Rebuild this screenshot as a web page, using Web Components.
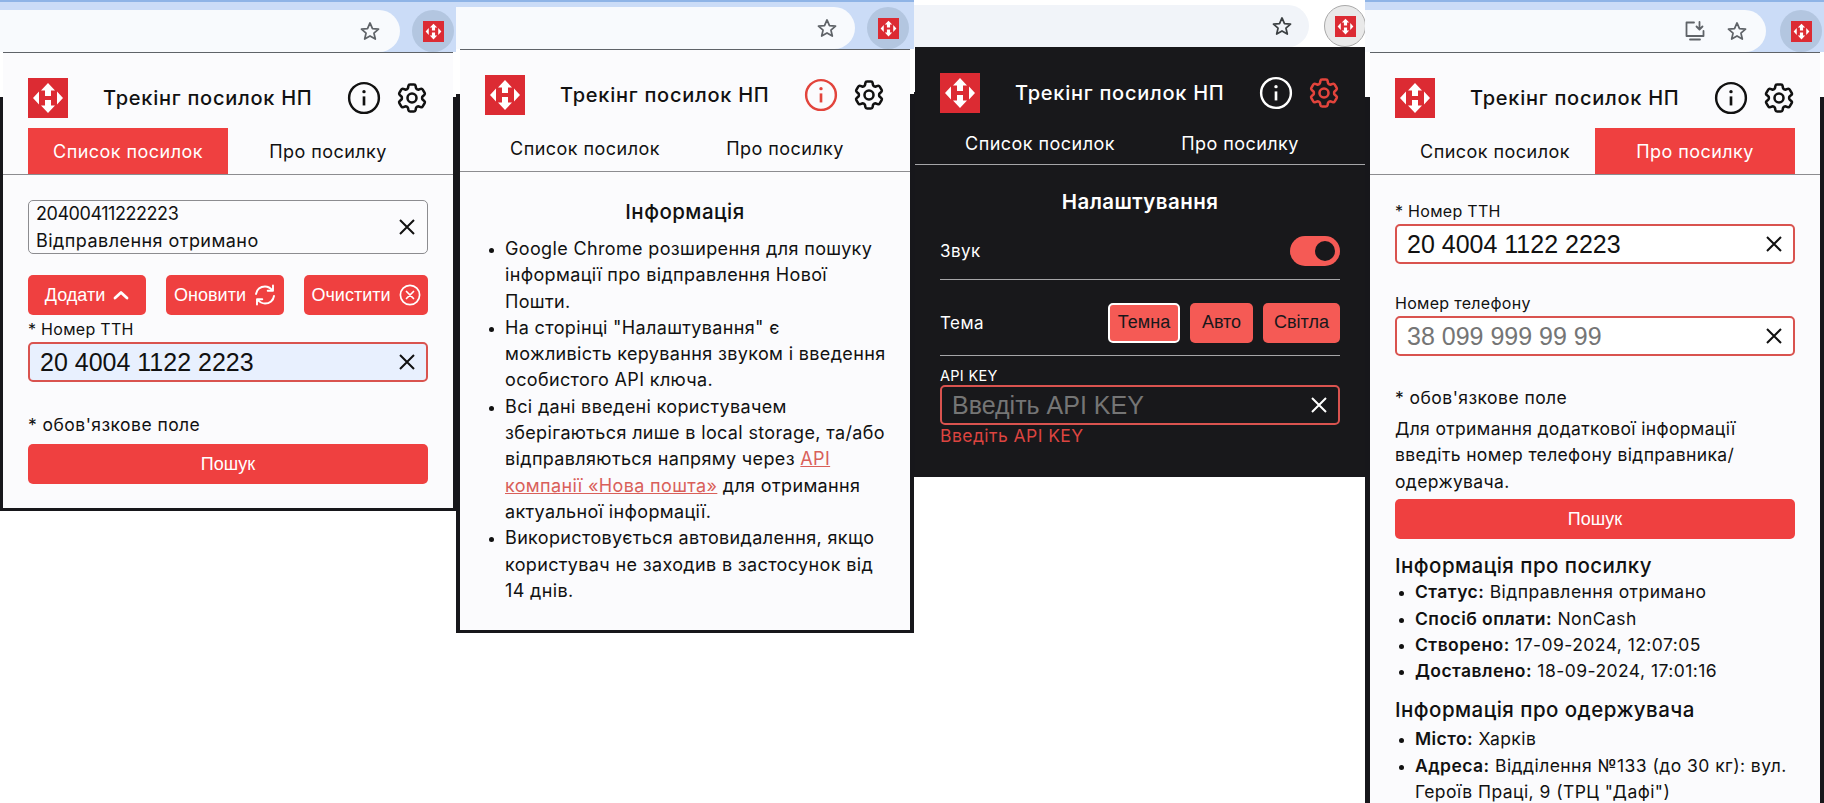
<!doctype html>
<html lang="uk">
<head>
<meta charset="utf-8">
<title>Трекінг посилок НП</title>
<style>
  html, body { margin: 0; height: 803px; overflow: hidden; background: #fff; }
  body { display: flex; align-items: flex-start; font-family: Inter, "Noto Sans", sans-serif; }
</style>
</head>
<body>

<np-shot style="--shot-w:456px;--pad-l:3px;--pad-r:3px" top="10">
  <np-popup tab="list">
    <np-stack style="--pad:25px 25px 24px">
      <np-parcel number="20400411222223" status="Відправлення отримано"></np-parcel>
      <div style="display:flex;justify-content:space-between;margin-top:21px">
        <np-button w="118" icon="chevron">Додати</np-button>
        <np-button w="118" icon="refresh">Оновити</np-button>
        <np-button w="124" icon="clear">Очистити</np-button>
      </div>
      <np-field label="* Номер ТТН" autofill style="margin-top:4px">20 4004 1122 2223</np-field>
      <np-note style="margin-top:32px">* обов'язкове поле</np-note>
      <np-button full style="margin-top:8px">Пошук</np-button>
    </np-stack>
  </np-popup>
</np-shot>

<np-shot style="--shot-w:458px;--pad-l:4px;--pad-r:4px;--ext-mr:5px;--star-r:17px" top="7">
  <np-popup selected="info">
    <np-stack style="--pad:28px 25px 26px">
      <np-heading>Інформація</np-heading>
      <np-list style="margin-top:12px;letter-spacing:.35px">
        <li>Google Chrome розширення для пошуку інформації про відправлення Нової Пошти.</li>
        <li>На сторінці "Налаштування" є можливість керування звуком і введення особистого API ключа.</li>
        <li><span>Всі дані введені користувачем</span> <span>зберігаються лише в local storage, та/або</span> <span>відправляються напряму через</span> <a href="#">API</a> <a href="#">компанії «Нова пошта»</a> <span>для отримання</span> <span>актуальної інформації.</span></li>
        <li>Використовується автовидалення, якщо користувач не заходив в застосунок від 14 днів.</li>
      </np-list>
    </np-stack>
  </np-popup>
</np-shot>

<np-shot style="--shot-w:451px;--pad-l:1px;--pad-r:0px;--ext-mr:-1px;--field-gap:15px;--star-r:16px" top="5" light>
  <np-popup dark selected="gear" style="--tabs-h:41px;--tabs-gap:10px">
    <np-stack style="--pad:25px 25px 27px">
      <np-heading style="font-weight:600">Налаштування</np-heading>
      <np-setting label="Звук" style="--row-h:66px;padding-top:8px">
        <np-toggle></np-toggle>
      </np-setting>
      <np-setting label="Тема" style="--row-h:76px;padding-top:10px">
        <np-button w="72" outlined>Темна</np-button>
        <np-button w="63" tone>Авто</np-button>
        <np-button w="77" tone>Світла</np-button>
      </np-setting>
      <np-field dark label="API KEY" empty style="margin-top:11px">Введіть API KEY</np-field>
      <np-note error style="margin-top:0">Введіть API KEY</np-note>
    </np-stack>
  </np-popup>
</np-shot>

<np-shot style="--shot-w:459px;--pad-l:5px;--pad-r:4px;--field-gap:14px;--star-r:18px" top="10" install>
  <np-popup tab="about">
    <np-stack style="--pad:25px 25px 24px">
      <np-field label="* Номер ТТН" style="margin-top:1px">20 4004 1122 2223</np-field>
      <np-field label="Номер телефону" empty style="margin-top:29px">38 099 999 99 99</np-field>
      <np-note style="margin-top:31px">* обов'язкове поле</np-note>
      <np-note style="margin-top:7px;line-height:26.4px;letter-spacing:.35px">Для отримання додаткової інформації введіть номер телефону відправника/ одержувача.</np-note>
      <np-button full style="margin-top:4px">Пошук</np-button>
      <np-heading left style="margin-top:15px">Інформація про посилку</np-heading>
      <np-list tight style="margin-top:1px">
        <li><b>Статус:</b> Відправлення отримано</li>
        <li><b>Спосіб оплати:</b> NonCash</li>
        <li><b>Створено:</b> 17-09-2024, 12:07:05</li>
        <li><b>Доставлено:</b> 18-09-2024, 17:01:16</li>
      </np-list>
      <np-heading left style="margin-top:14px">Інформація про одержувача</np-heading>
      <np-list tight style="margin-top:4px">
        <li><b>Місто:</b> Харків</li>
        <li><b>Адреса:</b> <span>Відділення №133 (до 30 кг): вул.</span> <span>Героїв Праці, 9 (ТРЦ "Дафі")</span></li>
      </np-list>
    </np-stack>
  </np-popup>
</np-shot>

<script>
const MONT = 'font-family: Inter, "Noto Sans", sans-serif; letter-spacing: .45px;'
const ARIAL = 'font-family: "Liberation Sans", Arial, sans-serif;'

const LOGO = `<svg viewBox="0 0 40 40" width="100%" height="100%" aria-hidden="true">
  <rect width="40" height="40" fill="#dc2b33"/>
  <path fill="#fff" d="M20 5 27 12.5H23V18H17V12.5H13ZM20 35 13 27.5H17V22H23V27.5H27ZM5 20 11 13.5V26.5ZM35 20 29 13.5V26.5Z"/>
</svg>`

const GEAR = 'M9.594 3.94c.09-.542.56-.94 1.11-.94h2.593c.55 0 1.02.398 1.11.94l.213 1.281c.063.374.313.686.645.87.074.04.147.083.22.127.325.196.72.257 1.075.124l1.217-.456a1.125 1.125 0 0 1 1.37.49l1.296 2.247a1.125 1.125 0 0 1-.26 1.431l-1.003.827c-.293.241-.438.613-.43.992a7.723 7.723 0 0 1 0 .255c-.008.378.137.75.43.991l1.004.827c.424.35.534.955.26 1.43l-1.298 2.247a1.125 1.125 0 0 1-1.369.491l-1.217-.456c-.355-.133-.75-.072-1.076.124a6.47 6.47 0 0 1-.22.128c-.331.183-.581.495-.644.869l-.213 1.281c-.09.543-.56.94-1.11.94h-2.594c-.55 0-1.019-.398-1.11-.94l-.213-1.281c-.062-.374-.312-.686-.644-.87a6.52 6.52 0 0 1-.22-.127c-.325-.196-.72-.257-1.076-.124l-1.217.456a1.125 1.125 0 0 1-1.369-.49l-1.297-2.247a1.125 1.125 0 0 1 .26-1.431l1.004-.827c.292-.24.437-.613.43-.991a6.932 6.932 0 0 1 0-.255c.007-.38-.138-.751-.43-.992l-1.004-.827a1.125 1.125 0 0 1-.26-1.43l1.297-2.247a1.125 1.125 0 0 1 1.37-.491l1.216.456c.356.133.751.072 1.076-.124.072-.044.146-.086.22-.128.332-.183.582-.495.644-.869l.214-1.28Z'

const ICONS = {
  info: `<svg viewBox="0 0 32 32" width="34" height="34" fill="none" stroke="currentColor" stroke-width="2.3"><circle cx="16" cy="16" r="14"/><path d="M16 14.5V23" stroke-width="2.5"/><circle cx="16" cy="10" r="1.6" fill="currentColor" stroke="none"/></svg>`,
  gear: `<svg viewBox="0 0 24 24" width="36" height="36" fill="none" stroke="currentColor" stroke-width="1.7" stroke-linejoin="round"><path d="${GEAR}"/><circle cx="12" cy="12" r="3"/></svg>`,
  close: `<svg viewBox="0 0 18 18" width="18" height="18" fill="none" stroke="currentColor" stroke-width="2"><path d="M2 2 16 16M16 2 2 16"/></svg>`,
  chevron: `<svg viewBox="0 0 16 10" width="16" height="10" fill="none" stroke="currentColor" stroke-width="2.8" stroke-linecap="round" stroke-linejoin="round"><path d="M2 8 8 2.5 14 8"/></svg>`,
  refresh: `<svg viewBox="0 0 22 22" width="22" height="22" fill="none" stroke="currentColor" stroke-width="1.9" stroke-linecap="round" stroke-linejoin="round"><path d="M2 10C2.6 5.6 6.300 2.500 11 2.500c3.300 0 5.500 1.500 7.500 4M19 1.500v5.300h-5.300M20 12c-.6 4.400-4.300 7.500-9 7.500-3.300 0-5.500-1.500-7.500-4M3 20.500v-5.300h5.300"/></svg>`,
  clear: `<svg viewBox="0 0 22 22" width="22" height="22" fill="none" stroke="currentColor" stroke-width="1.7" stroke-linecap="round"><circle cx="11" cy="11" r="9.600"/><path d="M7.500 7.500 14.500 14.500M14.500 7.500 7.500 14.500"/></svg>`,
  star: `<svg viewBox="0 0 24 24" width="22" height="22" fill="none" stroke="currentColor" stroke-width="1.9" stroke-linejoin="round"><path d="M12 3.200 14.700 9.300 21.300 9.900 16.300 14.300 17.800 20.800 12 17.400 6.200 20.800 7.700 14.300 2.700 9.900 9.300 9.300Z"/></svg>`,
  install: `<svg viewBox="0 0 24 24" width="24" height="24" fill="none" stroke="currentColor" stroke-width="1.800" stroke-linecap="round" stroke-linejoin="round"><path d="M11 3.500H3.500V17H20.500V12M7 20.500H17M16.500 3V10M13.500 7.500 16.500 10.500 19.500 7.500"/></svg>`
}

class NpShot extends HTMLElement {
  constructor() {
    super()
    const top = this.getAttribute('top') || 10
    const light = this.hasAttribute('light')
    const install = this.hasAttribute('install')
    this.attachShadow({ mode: 'open' }).innerHTML = `
      <style>
        :host { display: block; flex: none; width: var(--shot-w); box-sizing: border-box; }
        .bar {
          display: flex; align-items: center; height: 42px; padding-top: ${top}px;
          background: ${light ? '#fff' : 'linear-gradient(#8fb4e6 2px, #cbdcf7 2px)'};
        }
        .field {
          flex: 1; height: 42px; display: flex; align-items: center; justify-content: flex-end;
          gap: 19px; padding-right: var(--star-r, 19px); box-sizing: border-box; margin-right: var(--field-gap, 12px);
          background: ${light ? '#f1f4f9' : '#f8fafd'}; border-radius: 0 21px 21px 0;
          color: ${light ? '#3c4043' : '#5f6368'};
        }
        .field svg { display: block; }
        .ext {
          width: 42px; height: 42px; margin-right: var(--ext-mr, 2px); border-radius: 50%; box-sizing: border-box;
          display: flex; align-items: center; justify-content: center;
          background: ${light ? '#e9e9e9' : '#b3c6e0'};
          ${light ? 'border: 1px solid #a9a9a9;' : ''}
        }
        .ext div { width: 21px; height: 21px; }
        .back {
          padding: 0 var(--pad-r) 3px var(--pad-l);
          background: linear-gradient(#fff 45px, #17171b 45px);
        }
      </style>
      <div class="bar">
        <div class="field">${install ? ICONS.install : ''}${ICONS.star}</div>
        <div class="ext"><div>${LOGO}</div></div>
      </div>
      <div class="back"><slot></slot></div>`
  }
}
customElements.define('np-shot', NpShot)

class NpPopup extends HTMLElement {
  constructor() {
    super()
    const tab = this.getAttribute('tab')
    const selected = this.getAttribute('selected')
    const dark = this.hasAttribute('dark')
    this.attachShadow({ mode: 'open' }).innerHTML = `
      <style>
        :host {
          display: block; box-sizing: border-box;
          --fg: ${dark ? '#fff' : '#111'};
          --bg: ${dark ? '#18181b' : '#fbfbfd'};
          --rule: ${dark ? '#a5a5a8' : '#8c8c90'};
          --red: #ef4040;
          background: var(--bg); color: var(--fg);
          border-top: 1px solid ${dark ? '#18181b' : '#5f6368'};
          ${MONT}
        }
        header { display: flex; align-items: center; padding: 25px 25px 0; height: 40px; }
        .logo { width: 40px; height: 40px; flex: none; }
        h1 { flex: 1; margin: 0 0 0 35px; font-size: 20px; font-weight: 500; letter-spacing: .75px; white-space: nowrap; }
        .tools { display: flex; align-items: center; gap: 13px; margin-right: -2px; }
        .tool { display: flex; color: var(--fg); }
        .tool.on { color: #e2443c; }
        nav {
          display: flex; margin-top: var(--tabs-gap, 10px); padding: 0 25px;
          border-bottom: 1px solid var(--rule);
        }
        nav div {
          flex: 1; height: var(--tabs-h, 46px); display: flex; align-items: center; justify-content: center;
          font-size: 18px;
        }
        nav div.on { background: var(--red); color: #fff; }
      </style>
      <header>
        <div class="logo">${LOGO}</div>
        <h1>Трекінг посилок НП</h1>
        <div class="tools">
          <span class="tool ${selected === 'info' ? 'on' : ''}">${ICONS.info}</span>
          <span class="tool ${selected === 'gear' ? 'on' : ''}">${ICONS.gear}</span>
        </div>
      </header>
      <nav>
        <div class="${tab === 'list' ? 'on' : ''}">Список посилок</div>
        <div class="${tab === 'about' ? 'on' : ''}">Про посилку</div>
      </nav>
      <slot></slot>`
  }
}
customElements.define('np-popup', NpPopup)

class NpStack extends HTMLElement {
  constructor() {
    super()
    this.attachShadow({ mode: 'open' }).innerHTML = `
      <style>:host { display: flex; flex-direction: column; padding: var(--pad); }</style>
      <slot></slot>`
  }
}
customElements.define('np-stack', NpStack)

class NpParcel extends HTMLElement {
  constructor() {
    super()
    this.attachShadow({ mode: 'open' }).innerHTML = `
      <style>
        :host {
          display: flex; align-items: center; justify-content: space-between; box-sizing: border-box;
          height: 54px; padding: 0 11px 0 7px; border: 1px solid #8c8c90; border-radius: 5px;
          font-size: 18px; line-height: 27px;
        }
        .num { letter-spacing: -.45px; }
        svg { display: block; }
      </style>
      <div><div class="num">${this.getAttribute('number')}</div><div>${this.getAttribute('status')}</div></div>
      ${ICONS.close}`
  }
}
customElements.define('np-parcel', NpParcel)

class NpButton extends HTMLElement {
  constructor() {
    super()
    const w = this.getAttribute('w')
    const icon = this.getAttribute('icon')
    const tone = this.hasAttribute('tone') || this.hasAttribute('outlined')
    this.attachShadow({ mode: 'open' }).innerHTML = `
      <style>
        :host {
          display: flex; align-items: center; justify-content: center; gap: 8px; box-sizing: border-box;
          ${w ? `width: ${w}px;` : ''} height: 40px; flex: none; border-radius: 5px;
          background: ${tone ? '#f55a55' : '#ef4040'}; color: ${tone ? '#18181b' : '#fff'};
          ${ARIAL} font-size: 18px; letter-spacing: 0;
          ${this.hasAttribute('outlined') ? 'border: 2px solid #fff;' : ''}
        }
        svg { display: block; }
      </style>
      <slot></slot>${icon ? ICONS[icon] : ''}`
  }
}
customElements.define('np-button', NpButton)

class NpField extends HTMLElement {
  constructor() {
    super()
    const autofill = this.hasAttribute('autofill')
    const dark = this.hasAttribute('dark')
    const empty = this.hasAttribute('empty')
    const bg = autofill ? '#e8f0fe' : dark ? '#18181b' : '#fff'
    const fg = empty ? '#757575' : '#111'
    this.attachShadow({ mode: 'open' }).innerHTML = `
      <style>
        :host { display: block; }
        label {
          display: block; font-size: ${dark ? 14.5 : 16}px; line-height: ${dark ? 18 : 20}px; letter-spacing: .3px;
          margin-bottom: ${dark ? 0 : 3}px;
        }
        .box {
          display: flex; align-items: center; justify-content: space-between; box-sizing: border-box;
          height: 40px; padding: 0 10px 0 10px; border: 2px solid #d9534f; border-radius: 5px;
          background: ${bg}; color: ${dark ? 'inherit' : '#111'};
        }
        .val { ${ARIAL} font-size: 25px; letter-spacing: 0; color: ${fg}; white-space: nowrap; }
        svg { display: block; }
      </style>
      <label>${this.getAttribute('label')}</label>
      <div class="box"><span class="val"><slot></slot></span>${ICONS.close}</div>`
  }
}
customElements.define('np-field', NpField)

class NpNote extends HTMLElement {
  constructor() {
    super()
    const error = this.hasAttribute('error')
    this.attachShadow({ mode: 'open' }).innerHTML = `
      <style>
        :host {
          display: block; font-size: 17.5px; line-height: 22px;
          ${error ? 'color: #dc4440;' : ''}
        }
      </style>
      <slot></slot>`
  }
}
customElements.define('np-note', NpNote)

class NpHeading extends HTMLElement {
  constructor() {
    super()
    this.attachShadow({ mode: 'open' }).innerHTML = `
      <style>
        :host {
          display: block; font-size: 20.5px; line-height: 24px; font-weight: 500;
          text-align: ${this.hasAttribute('left') ? 'left' : 'center'};
        }
      </style>
      <slot></slot>`
  }
}
customElements.define('np-heading', NpHeading)

// li/a/b come from the light DOM, so ::slotted can only reach the li itself
class NpList extends HTMLElement {
  constructor() {
    super()
    const tight = this.hasAttribute('tight')
    this.attachShadow({ mode: 'open' }).innerHTML = `
      <style>
        :host {
          display: block; font-size: ${tight ? 17.5 : 18}px; line-height: 26.3px;
          padding-left: 20px; margin-right: -5px;
        }
        ::slotted(li) { display: list-item; }
      </style>
      <slot></slot>`
  }
}
customElements.define('np-list', NpList)

class NpSetting extends HTMLElement {
  constructor() {
    super()
    this.attachShadow({ mode: 'open' }).innerHTML = `
      <style>
        :host {
          display: flex; align-items: center; height: var(--row-h); box-sizing: border-box;
          border-bottom: 1px solid var(--rule); font-size: 17px;
        }
        span { flex: 1; }
        .end { display: flex; gap: 10px; align-items: center; }
      </style>
      <span>${this.getAttribute('label')}</span>
      <div class="end"><slot></slot></div>`
  }
}
customElements.define('np-setting', NpSetting)

class NpToggle extends HTMLElement {
  constructor() {
    super()
    this.attachShadow({ mode: 'open' }).innerHTML = `
      <style>
        :host { display: flex; justify-content: flex-end; align-items: center; width: 50px; height: 30px;
          padding-right: 5px; box-sizing: border-box; border-radius: 15px; background: #f55a55; }
        i { width: 20px; height: 20px; border-radius: 50%; background: #18181b; }
      </style>
      <i></i>`
  }
}
customElements.define('np-toggle', NpToggle)
</script>
<style>
  a { color: #d9605a; }
  li::marker { font-size: 14px; }
  b { font-weight: 600; }
</style>
</body>
</html>
